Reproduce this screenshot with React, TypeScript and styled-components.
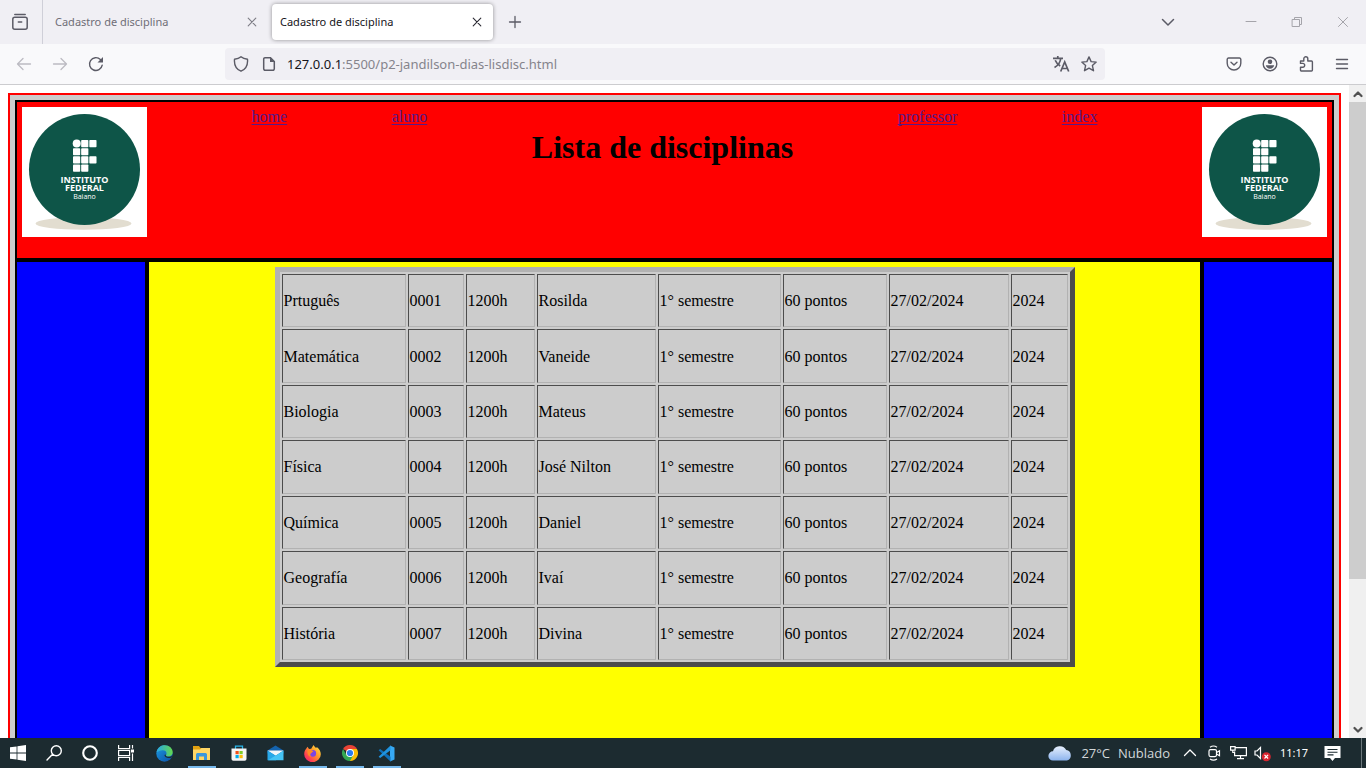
import React from 'react';
import styled, { createGlobalStyle } from 'styled-components';

const GlobalStyle = createGlobalStyle`
  * { box-sizing: border-box; }
  body { margin: 0; background: #fff; }
  button, input { font: inherit; }
  svg { display: block; flex: none; }
`;

const uiFont = '"Noto Sans", "Open Sans", sans-serif';
const pageFont = '"Liberation Serif", "Times New Roman", serif';

/* ---------- browser window ---------- */

const Desktop = styled.div`
  display: flex;
  flex-direction: column;
  height: 100vh;
  overflow: hidden;
`;

const IconButton = styled.button<{ $w?: number; $color?: string }>`
  display: flex;
  align-items: center;
  justify-content: center;
  width: ${(p) => p.$w ?? 36}px;
  height: 32px;
  flex: none;
  padding: 0;
  border: 0;
  background: none;
  color: ${(p) => p.$color ?? '#5b5b66'};
`;

const TabStrip = styled.header`
  display: flex;
  align-items: center;
  flex: none;
  height: 44px;
  background: #f0eff4;
  font-family: ${uiFont};
`;

const ViewCell = styled.div`
  display: flex;
  align-items: center;
  justify-content: flex-start;
  width: 43px;
  height: 44px;
  margin-right: 4px;
  padding-left: 2px;
  border-right: 1px solid #cfcfd8;
`;

const Tab = styled.div<{ $active?: boolean }>`
  display: flex;
  align-items: center;
  justify-content: space-between;
  width: 221px;
  height: 36px;
  margin-right: 4px;
  padding-left: 8px;
  border-radius: 4px;
  background: ${(p) => (p.$active ? '#fff' : 'transparent')};
  box-shadow: ${(p) => (p.$active ? '0 0 4px rgba(0, 0, 0, 0.4)' : 'none')};
`;

const TabTitle = styled.button<{ $active?: boolean }>`
  padding: 0;
  border: 0;
  background: none;
  font-size: 11px;
  line-height: 16px;
  color: ${(p) => (p.$active ? '#15141a' : '#6f6e77')};
`;

const Spacer = styled.div`
  flex: 1;
`;

const WindowButtons = styled.div`
  display: flex;
  margin-left: 30px;
`;

const Toolbar = styled.nav`
  display: flex;
  align-items: center;
  flex: none;
  height: 41px;
  padding: 0 6px;
  background: #f9f9fb;
  border-bottom: 1px solid #cccccf;
`;

const AddressBar = styled.div`
  display: flex;
  align-items: center;
  flex: 1;
  height: 32px;
  margin: 0 111px;
  padding: 0 2px;
  border-radius: 4px;
  background: #f0eff4;
  font-family: ${uiFont};
  font-size: 13px;
  line-height: 20px;
`;

const Host = styled.label`
  margin-left: 4px;
  color: #15141a;
`;

const UrlInput = styled.input`
  flex: 1;
  min-width: 0;
  padding: 0;
  border: 0;
  outline: 0;
  background: none;
  color: #85848c;
`;

const Viewport = styled.div`
  display: flex;
  flex: 1;
  min-height: 0;
`;

const Scroller = styled.main`
  flex: 1;
  min-width: 0;
  overflow: hidden;
  background: #fff;
`;

const ScrollBar = styled.div`
  display: flex;
  flex-direction: column;
  flex: none;
  width: 17px;
  background: #f0f0f0;
`;

const ScrollButton = styled.button`
  display: flex;
  align-items: center;
  justify-content: center;
  height: 17px;
  flex: none;
  padding: 0;
  border: 0;
  background: #f0f0f0;
  color: #505050;
`;

const ScrollThumb = styled.div`
  flex: 77;
  background: #cdcdcd;
`;

const ScrollTrack = styled.div`
  flex: 23;
`;

/* ---------- web page ---------- */

const Page = styled.div`
  margin: 8px;
  padding: 5px;
  border: 2px solid red;
  background: #ccc;
  font-family: ${pageFont};
  font-size: 16px;
  line-height: 20px;
  color: #000;
`;

const PageHeader = styled.header`
  display: flex;
  justify-content: space-between;
  align-items: flex-start;
  min-height: 160px;
  padding: 5px;
  border: 2px solid #000;
  background: red;
`;

const PageLink = styled.a`
  color: #551a8b;
  text-decoration: underline;
  text-decoration-thickness: 1px;
  text-underline-offset: 2px;
  text-decoration-skip-ink: none;
`;

const Title = styled.h1`
  margin: 22px 0;
  font-size: 32px;
  line-height: 37px;
`;

const Columns = styled.div`
  display: flex;
  min-height: 600px;
`;

const Side = styled.aside`
  flex: none;
  width: 132px;
  border: 2px solid #000;
  background: blue;
`;

const Content = styled.section`
  flex: 1;
  min-width: 0;
  padding: 5px;
  border: 2px solid #000;
  background: yellow;
`;

const Table = styled.table`
  width: 800px;
  height: 400px;
  margin: 0 auto;
  table-layout: fixed;
  border-collapse: separate;
  border-spacing: 2px;
  border: 5px solid;
  border-color: #b2b2b2 #4c4c4c #4c4c4c #b2b2b2;
  background: #ccc;
`;

const Cell = styled.td`
  padding: 1px 1px 0;
  border: 1px solid;
  border-color: #4c4c4c #b2b2b2 #b2b2b2 #4c4c4c;
`;

/* ---------- task bar ---------- */

const TaskBar = styled.footer`
  display: flex;
  flex: none;
  height: 30px;
  background: #1c2b30;
  color: #fff;
  font-family: ${uiFont};
  font-size: 12px;
`;

const TaskButton = styled.button<{ $w: number; $open?: boolean }>`
  display: flex;
  align-items: center;
  justify-content: center;
  flex: none;
  width: ${(p) => p.$w}px;
  height: 30px;
  padding: 0;
  border: 0;
  background: ${(p) =>
    p.$open ? 'linear-gradient(#76b9ed, #76b9ed) center bottom / 28px 2px no-repeat' : 'none'};
  color: #fff;
`;

const AppGroup = styled.div`
  display: flex;
  margin-left: 2px;
`;

const Weather = styled.button`
  display: flex;
  align-items: center;
  gap: 8px;
  padding: 0;
  margin-right: 8px;
  border: 0;
  background: none;
  color: #d3d8da;
  font-family: "Open Sans", "Noto Sans", sans-serif;
  font-size: 13px;
`;

const Clock = styled.time`
  width: 40px;
  line-height: 30px;
  font-size: 11px;
  text-align: center;
`;

const DesktopEdge = styled.div`
  width: 5px;
  margin-left: 10px;
  border-left: 1px solid #6b777b;
`;

/* ---------- drawings ---------- */

const Line = ({ d, size = 16, w = 1.3 }: { d: string; size?: number; w?: number }) => (
  <svg width={size} height={size} viewBox={`0 0 ${size} ${size}`} fill="none" stroke="currentColor"
    strokeWidth={w} strokeLinecap="round" strokeLinejoin="round" aria-hidden>
    <path d={d} />
  </svg>
);

const Cross = () => <Line d="M4.2 4.2l7.6 7.6M11.8 4.2l-7.6 7.6" w={1.1} />;

const blocks = [
  [8, 0], [16, 0], [0, 8], [8, 8], [0, 16], [8, 16], [16, 16], [0, 24], [8, 24],
];

const InstituteLogo = () => (
  <svg width="125" height="130" viewBox="0 0 125 130" role="img" aria-label="Instituto Federal Baiano">
    <rect width="125" height="130" fill="#fff" />
    <ellipse cx="61.500" cy="116.500" rx="48" ry="6.300" fill="#e2ddd0" />
    <circle cx="62.500" cy="62.500" r="55.500" fill="#0e5548" />
    <g fill="#fff">
      <circle cx="54.700" cy="36.600" r="4" />
      {blocks.map(([x, y]) => (
        <rect key={`${x}-${y}`} x={51 + x * 1.02} y={33 + y * 1.02} width="7.200" height="7.200" rx="0.800" />
      ))}
      <g textAnchor="middle" fontFamily='"Open Sans", "Noto Sans", sans-serif'>
        <text x="62.500" y="76" fontSize="9" fontWeight="700">INSTITUTO</text>
        <text x="62.500" y="84" fontSize="9" fontWeight="700">FEDERAL</text>
        <text x="62.500" y="92" fontSize="7">Baiano</text>
      </g>
    </g>
  </svg>
);

const ViewIcon = () => (
  <svg width="18" height="18" viewBox="0 0 18 18" fill="none" stroke="currentColor" strokeWidth="1.500" strokeLinecap="round" aria-hidden>
    <path d="M3.800 1.500h10.400" />
    <rect x="1.800" y="4.300" width="14.400" height="12" rx="2" />
    <path d="M7.300 9h3.400" />
  </svg>
);

const ReloadIcon = () => (
  <svg width="16" height="16" viewBox="0 0 16 16" aria-hidden>
    <path d="M14.200 9.200A6.400 6.400 0 1 1 12.400 3.500" fill="none" stroke="currentColor" strokeWidth="1.400" strokeLinecap="round" />
    <path d="M15 1v5.500H9.500z" fill="currentColor" />
  </svg>
);

const DocIcon = () => (
  <svg width="16" height="16" viewBox="0 0 16 16" aria-hidden>
    <path d="M4 1.700h5.500L13.300 5.500v7.300a1.500 1.500 0 0 1-1.500 1.500H4.200a1.500 1.500 0 0 1-1.500-1.500V3A1.300 1.300 0 0 1 4 1.700z"
      fill="none" stroke="currentColor" strokeWidth="1.500" />
    <path d="M9 1.500v4.500h4.500z" fill="currentColor" />
  </svg>
);

const TranslateIcon = () => (
  <svg width="18" height="18" viewBox="0 0 18 18" fill="none" stroke="currentColor" strokeWidth="1.700" aria-hidden>
    <path d="M1 3.300h10M5.800 1v2.300M2.500 12.500C6 10.500 8.300 7.500 8.700 3.500M3.200 5.300c1 2.500 2.600 4.200 5 5.600" />
    <path d="M8.700 16.500L12.700 7l4 9.500M10 13.500h5.400" />
  </svg>
);

const AccountIcon = () => (
  <svg width="16" height="16" viewBox="0 0 16 16" aria-hidden>
    <circle cx="8" cy="8" r="6.800" fill="none" stroke="currentColor" strokeWidth="1.400" />
    <circle cx="8" cy="5.800" r="2.300" fill="currentColor" />
    <path d="M3.800 9.300h8.400c-.5 2.200-2.100 3.400-4.200 3.400S4.300 11.500 3.800 9.300z" fill="currentColor" />
  </svg>
);

const WindowsIcon = () => (
  <svg width="16" height="16" viewBox="0 0 16 16" fill="#fff" aria-hidden>
    <path d="M0 2.300l6.600-.9v6.100H0zM7.400 1.300L16 0v7.500H7.400zM0 8.400h6.600v6.200L0 13.700zM7.400 8.400H16V16l-8.600-1.300z" />
  </svg>
);

const SearchIcon = () => <Line d="M15.300 5.700a5 5 0 1 1-10 0a5 5 0 1 1 10 0M6.600 9.200L1 15" w={1.4} />;

const CortanaIcon = () => (
  <svg width="18" height="18" viewBox="0 0 18 18" aria-hidden>
    <circle cx="9" cy="9" r="6.800" fill="none" stroke="#fff" strokeWidth="2.100" />
  </svg>
);

const TaskViewIcon = () => (
  <svg width="17" height="16" viewBox="0 0 17 16" fill="none" stroke="#fff" strokeWidth="1.200" aria-hidden>
    <path d="M.6 0v3.500h11V0M.6 16v-3.500h11V16M.6 5.400h11v5.200H.6zM14.500 0v3.500M14.500 8.500V16" />
    <rect x="13" y="4.500" width="3" height="3" fill="#fff" stroke="none" />
  </svg>
);

const EdgeIcon = () => (
  <svg width="17" height="17" viewBox="0 0 17 17" aria-hidden>
    <defs>
      <linearGradient id="edgeTop" x1="0" x2="1"><stop offset="0" stopColor="#28a8e8" /><stop offset="1" stopColor="#62d84e" /></linearGradient>
      <linearGradient id="edgeBase" x1="0" x2="1" y1="0" y2="1"><stop offset="0" stopColor="#1b9de2" /><stop offset="1" stopColor="#0c4da5" /></linearGradient>
    </defs>
    <circle cx="8.500" cy="8.500" r="8.200" fill="url(#edgeBase)" />
    <path d="M.4 7.500C1.300 3 4.700.3 8.700.3c4.700 0 8 3.300 8 6.900 0 2.500-1.800 4.300-4.200 4.300-2 0-3-.8-2.300-1.700.8-1.400.2-4.600-3.300-4.600-2.800 0-5 1.200-6.500 2.300z" fill="url(#edgeTop)" />
    <path d="M9.800 9.500c-.5 1.500.8 2.300 2.900 2.300 1.400 0 2.400-.3 3.500-1.100l-.5 1.700c-3 1.200-7 .6-7.300-2.400z" fill="#1c2b30" />
  </svg>
);

const FolderIcon = () => (
  <svg width="17" height="16" viewBox="0 0 17 16" aria-hidden>
    <path d="M0 1h6l1.500 2H16v4H0z" fill="#e0a010" />
    <path d="M0 4.500h7l1.500-1.500H17v12H0z" fill="#ffd766" />
    <path d="M3 15V9.500Q3 8 4.500 8h8Q14 8 14 9.500V15h-3v-3.500H6V15z" fill="#3a97dd" />
  </svg>
);

const StoreIcon = () => (
  <svg width="16" height="16" viewBox="0 0 16 16" aria-hidden>
    <path d="M4.500 4V1.200h7V4" fill="none" stroke="#29b6e8" strokeWidth="1.300" />
    <path d="M.5 3.500h15v10.500a1.800 1.800 0 0 1-1.800 1.800H2.300A1.800 1.800 0 0 1 .5 14z" fill="#f5f5f5" />
    <path d="M4.500 6h3.200v3.200H4.500z" fill="#f1511b" /><path d="M8.500 6h3.200v3.200H8.500z" fill="#80cc28" />
    <path d="M4.500 10h3.200v3.200H4.500z" fill="#00adef" /><path d="M8.500 10h3.200v3.200H8.500z" fill="#fbbc09" />
  </svg>
);

const MailIcon = () => (
  <svg width="17" height="16" viewBox="0 0 17 16" aria-hidden>
    <path d="M.5 5.500L8.500.5l8 5v3h-16z" fill="#1463ad" />
    <path d="M.5 5.500h16L8.500 11z" fill="#f3f7fa" />
    <path d="M.5 5.500L11 12l-2 3.300H.5z" fill="#28a8e8" />
    <path d="M16.500 5.500v9.800H1L9.500 10z" fill="#45c4f5" />
  </svg>
);

const FirefoxIcon = () => (
  <svg width="17" height="17" viewBox="0 0 17 17" aria-hidden>
    <defs>
      <linearGradient id="fox" x1="1" x2="0" y1="0" y2="1">
        <stop offset="0" stopColor="#fff04a" /><stop offset=".4" stopColor="#ff9a28" /><stop offset=".75" stopColor="#ff3d52" /><stop offset="1" stopColor="#e31587" />
      </linearGradient>
    </defs>
    <path d="M3.500 1.700L5 4l2.200-.2L9.500 0c1 1.300 1.500 2.200 2.800 3l.5-1c2.500 2 4 4.300 4 7.200a8.300 8 0 0 1-16.600 0C.2 6 1.500 4.500 3.500 1.700z" fill="url(#fox)" />
    <circle cx="8.800" cy="8.400" r="3.300" fill="#7a45e5" />
    <path d="M3.600 5.200c2.200-.8 4.700-.2 5.800 1.500-1.700 0-1.300 1.300-2.600 1.800-.7.300-1 2.500 1.300 3-2.900.7-5.300-1.900-4.500-6.300z" fill="#ff8a24" />
  </svg>
);

const ChromeIcon = () => (
  <svg width="16" height="16" viewBox="0 0 16 16" aria-hidden>
    <path d="M8 8L1.070 4A8 8 0 0 1 14.930 4z" fill="#ea4335" />
    <path d="M8 8V4h6.930A8 8 0 0 1 8 16z" fill="#fbbc05" />
    <path d="M8 8l3.460 2L8 16A8 8 0 0 1 1.070 4L4.540 10z" fill="#34a853" />
    <circle cx="8" cy="8" r="4" fill="#fff" /><circle cx="8" cy="8" r="3.100" fill="#2a7bf0" />
  </svg>
);

const CodeIcon = () => (
  <svg width="17" height="17" viewBox="0 0 17 17" aria-hidden>
    <path d="M12 .5L16.500 2.500v12L12 16.500z" fill="#36a9f4" />
    <path d="M.6 5.300l1.600-1.300L12.500 11.700V16.500z" fill="#0f6fb8" />
    <path d="M.6 11.700l1.600 1.300L12.500 5.300V.5z" fill="#1f93df" />
  </svg>
);

const CloudIcon = () => (
  <svg width="25" height="16" viewBox="0 0 25 16" aria-hidden>
    <defs><linearGradient id="cloud" x1="0" x2="0" y1="0" y2="1"><stop offset="0" stopColor="#e6effd" /><stop offset="1" stopColor="#8db4ee" /></linearGradient></defs>
    <path d="M5 15.500a4.600 4.600 0 0 1 0-9.200A7 6.500 0 0 1 18.200 5a5.400 5.400 0 0 1 .8 10.500z" fill="url(#cloud)" />
  </svg>
);

const CameraIcon = () => (
  <svg width="16" height="16" viewBox="0 0 16 16" fill="none" stroke="#fff" strokeWidth="1.200" aria-hidden>
    <rect x="3" y="4.600" width="7.500" height="7" rx="1.500" /><path d="M10.500 7.500l3-1.700v5l-3-1.700M4 2.200Q7.500-.2 11 2.200M4 14Q7.500 16.400 11 14" />
  </svg>
);

const NetworkIcon = () => (
  <svg width="17" height="16" viewBox="0 0 17 16" fill="none" stroke="#fff" strokeWidth="1.200" aria-hidden>
    <path d="M5.500 2.600h10.900v8H4.600V6.500M10.500 10.600v3M7 13.600h7M.6 1.600h4.500v3.500H.6zM2.800 5v2.500h1.800" />
  </svg>
);

const MutedIcon = () => (
  <svg width="17" height="17" viewBox="0 0 17 17" aria-hidden>
    <path d="M1 6h2l3.500-3.500v11L3 10H1z" fill="none" stroke="#fff" strokeWidth="1.200" />
    <circle cx="12.300" cy="11.700" r="4.500" fill="#d9252f" /><path d="M10.500 9.900l3.600 3.600M14.100 9.900l-3.600 3.600" stroke="#fff" strokeWidth="1.200" />
  </svg>
);

const NoticeIcon = () => (
  <svg width="17" height="17" viewBox="0 0 17 17" aria-hidden>
    <path d="M.5 1h16v12H11l-2.500 3L6 13H.5z" fill="#fff" />
    <path d="M3.500 4.500h10M3.500 7.200h10M3.500 9.900h6" stroke="#1c2b30" strokeWidth="1.100" />
  </svg>
);

/* ---------- data ---------- */

const columns = [124, 56, 69, 119, 123, 104, 120, 57];

const subjects = [
  ['Prtuguês', '0001', 'Rosilda'],
  ['Matemática', '0002', 'Vaneide'],
  ['Biologia', '0003', 'Mateus'],
  ['Física', '0004', 'José Nilton'],
  ['Química', '0005', 'Daniel'],
  ['Geografía', '0006', 'Ivaí'],
  ['História', '0007', 'Divina'],
];

const systemButtons = [
  { label: 'Iniciar', icon: <WindowsIcon /> },
  { label: 'Pesquisar', icon: <SearchIcon /> },
  { label: 'Cortana', icon: <CortanaIcon /> },
  { label: 'Visão de tarefas', icon: <TaskViewIcon /> },
];

const apps = [
  { label: 'Edge', icon: <EdgeIcon /> },
  { label: 'Explorador de arquivos', icon: <FolderIcon />, open: true },
  { label: 'Loja', icon: <StoreIcon /> },
  { label: 'Email', icon: <MailIcon /> },
  { label: 'Firefox', icon: <FirefoxIcon />, open: true },
  { label: 'Chrome', icon: <ChromeIcon />, open: true },
  { label: 'Visual Studio Code', icon: <CodeIcon />, open: true },
];

export default function App() {
  return (
    <Desktop>
      <GlobalStyle />
      <TabStrip>
        <ViewCell><IconButton aria-label="Firefox View"><ViewIcon /></IconButton></ViewCell>
        {[false, true].map((active) => (
          <Tab key={String(active)} $active={active}>
            <TabTitle $active={active}>Cadastro de disciplina</TabTitle>
            <IconButton $w={32} $color={active ? '#2b2a33' : '#7d7c85'} aria-label="Fechar aba"><Cross /></IconButton>
          </Tab>
        ))}
        <IconButton aria-label="Nova aba"><Line d="M8 2.500v11M2.500 8h11" /></IconButton>
        <Spacer />
        <IconButton $w={60} aria-label="Listar abas"><Line d="M2.500 5.500L8 11l5.500-5.500" w={1.5} /></IconButton>
        <WindowButtons>
          <IconButton $w={46} $color="#a5a4aa" aria-label="Minimizar"><Line d="M3 7.500h10" w={1} /></IconButton>
          <IconButton $w={46} $color="#a5a4aa" aria-label="Restaurar"><Line d="M3.500 5.500h7v7h-7zM5.500 5.500v-2h7v7h-2" w={1} /></IconButton>
          <IconButton $w={46} $color="#a5a4aa" aria-label="Fechar"><Line d="M3.500 3.500l9 9M12.500 3.500l-9 9" w={1} /></IconButton>
        </WindowButtons>
      </TabStrip>

      <Toolbar>
        <IconButton $color="#bcbbc2" aria-label="Voltar"><Line d="M14.500 8H1.500M7 2.500L1.500 8 7 13.500" /></IconButton>
        <IconButton $color="#bcbbc2" aria-label="Avançar"><Line d="M1.500 8h13M9 2.500L14.500 8 9 13.500" /></IconButton>
        <IconButton aria-label="Recarregar"><ReloadIcon /></IconButton>
        <AddressBar>
          <IconButton $w={28} aria-label="Proteção"><Line d="M8 .8C10 2.500 12 3 14.500 3.300 15 9 12.500 13.300 8 15.200 3.500 13.300 1 9 1.500 3.300 4 3 6 2.500 8 .8z" w={1.4} /></IconButton>
          <IconButton $w={28} aria-label="Informações do site"><DocIcon /></IconButton>
          <Host htmlFor="url">127.0.0.1</Host>
          <UrlInput id="url" defaultValue=":5500/p2-jandilson-dias-lisdisc.html" />
          <IconButton $w={28} aria-label="Traduzir"><TranslateIcon /></IconButton>
          <IconButton $w={28} aria-label="Favoritar"><Line d="M8 .9l2.100 4.700 5.100.5-3.800 3.500 1.100 5.100L8 12.100l-4.500 2.600 1.100-5.100L.8 6.100l5.100-.5z" w={1.4} /></IconButton>
        </AddressBar>
        <IconButton aria-label="Pocket"><Line d="M2.500 2h11a1.300 1.300 0 0 1 1.300 1.300v3.900a6.800 6.800 0 0 1-13.600 0V3.300A1.300 1.300 0 0 1 2.500 2zM5 6.200l3 2.800 3-2.800" w={1.4} /></IconButton>
        <IconButton aria-label="Conta"><AccountIcon /></IconButton>
        <IconButton aria-label="Extensões"><Line d="M2.500 5h3.300V2.800a2 2 0 0 1 4 0V5h3.700a.9.900 0 0 1 .9.900v8.200a.9.900 0 0 1-.9.900h-10a1 1 0 0 1-1-1v-2.800h2.300a1.900 1.900 0 0 0 0-3.800H2.500z" w={1.4} /></IconButton>
        <IconButton aria-label="Menu"><Line d="M2.500 3.500h11M2.500 8h11M2.500 12.500h11" w={1.4} /></IconButton>
      </Toolbar>

      <Viewport>
        <Scroller>
          <Page>
            <PageHeader>
              <InstituteLogo />
              <PageLink href="#home">home</PageLink>
              <PageLink href="#aluno">aluno</PageLink>
              <Title>Lista de disciplinas</Title>
              <PageLink href="#professor">professor</PageLink>
              <PageLink href="#index">index</PageLink>
              <InstituteLogo />
            </PageHeader>
            <Columns>
              <Side />
              <Content>
                <Table>
                  <colgroup>
                    {columns.map((width, i) => <col key={i} style={{ width }} />)}
                  </colgroup>
                  <tbody>
                    {subjects.map(([name, code, teacher]) => (
                      <tr key={code}>
                        {[name, code, '1200h', teacher, '1° semestre', '60 pontos', '27/02/2024', '2024'].map((text, i) => (
                          <Cell key={i}>{text}</Cell>
                        ))}
                      </tr>
                    ))}
                  </tbody>
                </Table>
              </Content>
              <Side />
            </Columns>
          </Page>
        </Scroller>
        <ScrollBar>
          <ScrollButton aria-label="Rolar para cima"><Line d="M1.500 7L5 3.500 8.500 7" size={10} w={2.2} /></ScrollButton>
          <ScrollThumb />
          <ScrollTrack />
          <ScrollButton aria-label="Rolar para baixo"><Line d="M1.500 3L5 6.500 8.500 3" size={10} w={2.2} /></ScrollButton>
        </ScrollBar>
      </Viewport>

      <TaskBar>
        {systemButtons.map((b) => <TaskButton key={b.label} $w={36} aria-label={b.label}>{b.icon}</TaskButton>)}
        <AppGroup>
          {apps.map((a) => <TaskButton key={a.label} $w={37} $open={a.open} aria-label={a.label}>{a.icon}</TaskButton>)}
        </AppGroup>
        <Spacer />
        <Weather>
          <CloudIcon />
          <span>27°C</span>
          <span>Nublado</span>
        </Weather>
        <TaskButton $w={24} aria-label="Mostrar ícones ocultos"><Line d="M2.500 10.500L8 5l5.500 5.500" /></TaskButton>
        <TaskButton $w={24} aria-label="Câmera"><CameraIcon /></TaskButton>
        <TaskButton $w={24} aria-label="Rede"><NetworkIcon /></TaskButton>
        <TaskButton $w={24} aria-label="Volume"><MutedIcon /></TaskButton>
        <Clock>11:17</Clock>
        <TaskButton $w={37} aria-label="Notificações"><NoticeIcon /></TaskButton>
        <DesktopEdge />
      </TaskBar>
    </Desktop>
  );
}
